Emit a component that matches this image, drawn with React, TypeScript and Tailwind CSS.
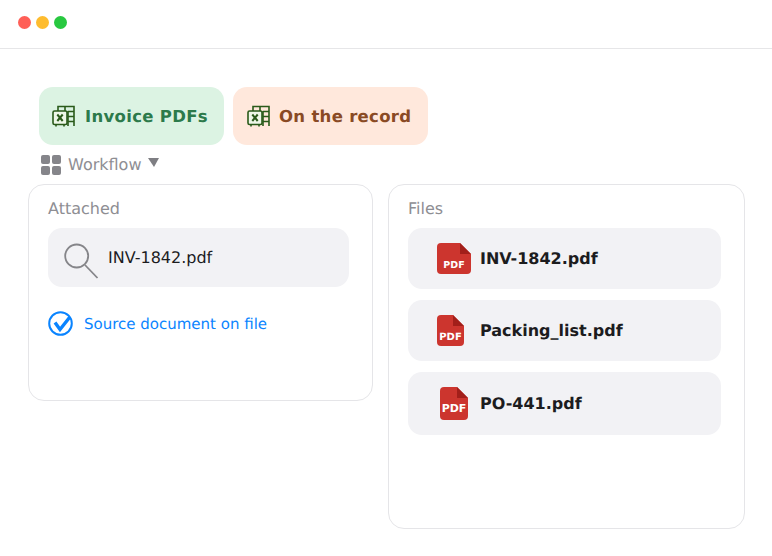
import React from 'react';

const SheetIcon: React.FC = () => (
  <svg width="24" height="22" viewBox="0 0 24 22" fill="none" stroke="#2a5a1a" strokeWidth="1.6" className="shrink-0">
    <path d="M6 6V1.5h16V21" />
    <path d="M13 1.5V6M16 6.5h6M16 11.5h6M16 16.5h6M16 6v15" />
    <rect x="1" y="6" width="14" height="13.5" rx="1.5" fill="#eef7e8" />
    <path d="M4 19.5v2M12 19.5v2" />
    <path d="M5.3 9.5l5.4 6.5M10.7 9.5l-5.4 6.5" strokeWidth="2" />
  </svg>
);

const MagnifierIcon: React.FC = () => (
  <svg width="36" height="38" viewBox="0 0 36 38" fill="none" stroke="#858589" strokeWidth="1.8" className="shrink-0">
    <circle cx="13.7" cy="13" r="11.5" />
    <path d="M22 22l12.5 13" />
  </svg>
);

const CheckIcon: React.FC = () => (
  <svg width="25" height="25" viewBox="0 0 25 25" fill="none" stroke="#0a84ff" className="shrink-0">
    <circle cx="12.5" cy="12.5" r="11.3" strokeWidth="2" />
    <path d="M7 11.5l5 7L21.5 6.5" strokeWidth="3.4" />
  </svg>
);

const PdfIcon: React.FC<{ w: number; h: number; size: number; base: number }> = ({ w, h, size, base }) => (
  <svg width={w} height={h} viewBox={`0 0 ${w} ${h}`} className="shrink-0">
    <path
      d={`M4 0H${w - 11}L${w} 11V${h - 4}a4 4 0 0 1-4 4H4a4 4 0 0 1-4-4V4a4 4 0 0 1 4-4z`}
      fill="#cc352e"
    />
    <path d={`M${w - 11} 0L${w} 11H${w - 11}z`} fill="#a21f1a" />
    <text
      x={w / 2}
      y={h - base}
      textAnchor="middle"
      fontSize={size}
      fontWeight="700"
      fill="#ffffff"
      fontFamily="'DejaVu Sans', sans-serif"
    >
      PDF
    </text>
  </svg>
);

const files = [
  { name: 'INV-1842.pdf', w: 34, h: 31, size: 9.5, base: 6, rowClass: 'h-[61px] mb-[11px]', iconClass: 'ml-[29px] mr-[9px]' },
  { name: 'Packing_list.pdf', w: 27, h: 31, size: 10, base: 6, rowClass: 'h-[61px] mb-[11px]', iconClass: 'ml-[29px] mr-[16px]' },
  { name: 'PO-441.pdf', w: 28, h: 33, size: 11, base: 8, rowClass: 'h-[63px]', iconClass: 'ml-[32px] mr-[12px]' },
];

export default function App() {
  return (
    <div className="w-[772px] h-[556px] bg-white overflow-hidden font-['DejaVu_Sans',sans-serif] [text-rendering:geometricPrecision]">
      <div className="h-[49px] border-b border-[#e6e6e8] flex items-center gap-[5px] pl-[18px] pb-[4px]">
        <span className="w-[13px] h-[13px] rounded-full bg-[#ff5f57]" />
        <span className="w-[13px] h-[13px] rounded-full bg-[#febc2e]" />
        <span className="w-[13px] h-[13px] rounded-full bg-[#28c840]" />
      </div>

      <div className="flex gap-[9px] pl-[39px] pt-[38px]">
        <div className="w-[185px] h-[58px] rounded-[14px] bg-[#dcf3e3] flex items-center gap-[9px] pl-[13px]">
          <SheetIcon />
          <span className="text-[16.5px] tracking-[0.3px] leading-[24px] mt-[1px] font-bold text-[#2c7a4b]">Invoice PDFs</span>
        </div>
        <div className="w-[195px] h-[58px] rounded-[14px] bg-[#ffe8dc] flex items-center gap-[8px] pl-[14px]">
          <SheetIcon />
          <span className="text-[16.5px] tracking-[0.3px] leading-[24px] mt-[1px] font-bold text-[#8a4a24]">On the record</span>
        </div>
      </div>

      <div className="flex items-center pl-[41px] h-[39px] text-[#8e8e93]">
        <div className="grid grid-cols-2 gap-[2px] mr-[7px]">
          <span className="w-[9px] h-[9px] rounded-[2px] bg-[#85858a]" />
          <span className="w-[9px] h-[9px] rounded-[2px] bg-[#85858a]" />
          <span className="w-[9px] h-[9px] rounded-[2px] bg-[#85858a]" />
          <span className="w-[9px] h-[9px] rounded-[2px] bg-[#85858a]" />
        </div>
        <span className="text-[16px] leading-[24px]">Workflow</span>
        <span className="ml-[7px] mb-[4px] w-0 h-0 border-l-[6px] border-r-[5px] border-x-transparent border-t-[9px] border-t-[#7e7e83]" />
      </div>

      <div className="flex items-start gap-[15px] pl-[28px]">
        <div className="w-[345px] h-[217px] rounded-[16px] border border-[#e5e5e8] pl-[19px] pr-[23px] pt-[14px]">
          <div className="text-[16px] leading-[20px] text-[#8e8e93] mb-[9px]">Attached</div>
          <div className="h-[59px] rounded-[14px] bg-[#f2f2f5] flex items-center pl-[15px] pt-[9px]">
            <MagnifierIcon />
            <span className="ml-[9px] mb-[9px] text-[16px] leading-[24px] text-[#1c1c1e]">INV-1842.pdf</span>
          </div>
          <div className="flex items-center gap-[11px] mt-[24px]">
            <CheckIcon />
            <span className="text-[15px] leading-[24px] text-[#0a84ff]">Source document on file</span>
          </div>
        </div>

        <div className="w-[357px] h-[345px] rounded-[16px] border border-[#e5e5e8] pl-[19px] pr-[23px] pt-[14px]">
          <div className="text-[16px] leading-[20px] text-[#8e8e93] mb-[9px]">Files</div>
          {files.map(f => (
            <div key={f.name} className={`${f.rowClass} rounded-[14px] bg-[#f2f2f5] flex items-center`}>
              <div className={f.iconClass}>
                <PdfIcon w={f.w} h={f.h} size={f.size} base={f.base} />
              </div>
              <span className="text-[16px] leading-[24px] font-bold text-[#1c1c1e]">{f.name}</span>
            </div>
          ))}
        </div>
      </div>
    </div>
  );
}
